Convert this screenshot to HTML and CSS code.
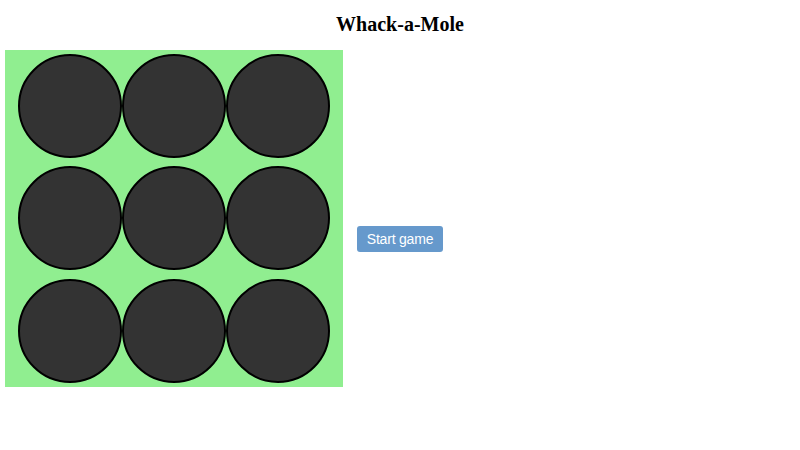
FILE: index.html
```html
<!DOCTYPE html>
<html>
<head>
<meta charset="utf-8">
<title>Whack-a-Mole</title>
<link rel="stylesheet" href="styles.css">
</head>
<body>
<h1 class="title">Whack-a-Mole</h1>
<div class="game">
  <div class="board">
    <div class="hole"></div>
    <div class="hole"></div>
    <div class="hole"></div>
    <div class="hole"></div>
    <div class="hole"></div>
    <div class="hole"></div>
    <div class="hole"></div>
    <div class="hole"></div>
    <div class="hole"></div>
  </div>
  <button class="start">Start game</button>
</div>
</body>
</html>
```
FILE: styles.css
```css
body {
  margin: 0;
  font-family: "Liberation Serif", "Times New Roman", serif;
  background: #fff;
}
.title {
  text-align: center;
  font-size: 20px;
  line-height: 23px;
  font-weight: bold;
  margin: 13px 0 14px;
}
.game {
  display: flex;
  align-items: flex-start;
  padding-left: 5px;
  gap: 14px;
}
.board {
  width: 338px;
  height: 337px;
  background: #90ee90;
  display: grid;
  grid-template-columns: repeat(3, 104px);
  grid-template-rows: repeat(3, 1fr);
  justify-content: center;
  align-items: center;
}
.hole {
  width: 100px;
  height: 100px;
  border: 2px solid #000;
  border-radius: 50%;
  background: #333;
}
.start {
  margin-top: 176px;
  width: 86px;
  height: 26px;
  background: #6699cc;
  color: #fff;
  border: none;
  border-radius: 3px;
  font-family: "Liberation Sans", Arial, sans-serif;
  font-size: 14px;
  letter-spacing: -0.2px;
  padding: 0;
}
```
